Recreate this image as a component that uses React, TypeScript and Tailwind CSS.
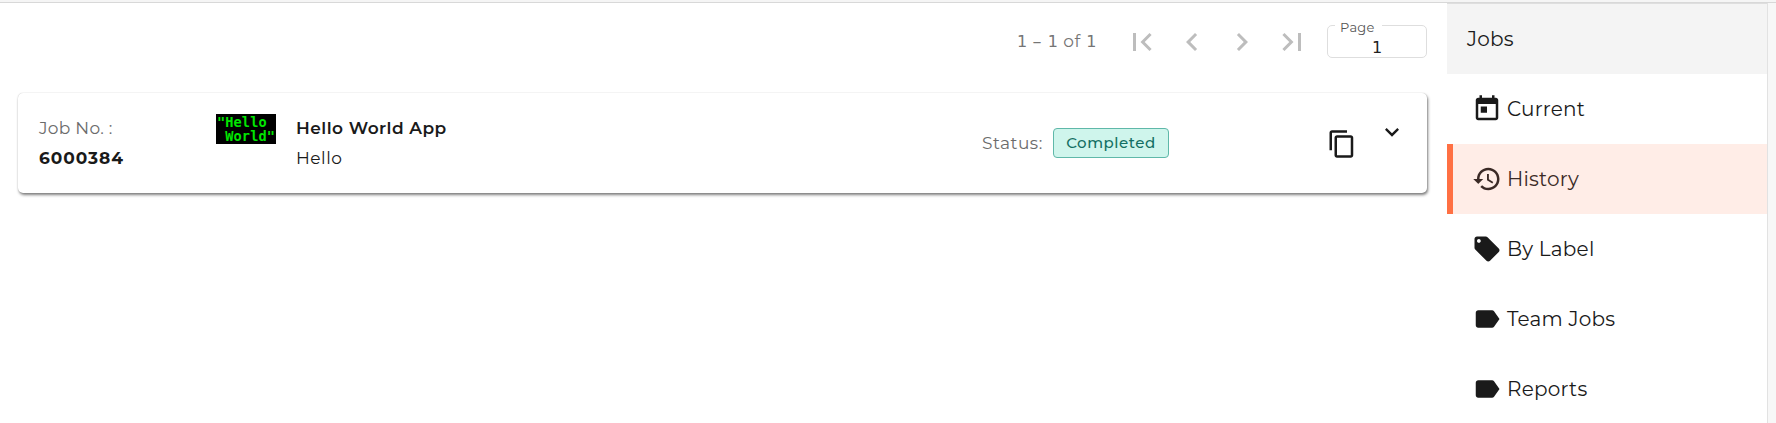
import React from "react";

type IconProps = { d: string; className?: string };

function Icon({ d, className = "" }: IconProps) {
  return (
    <svg viewBox="0 0 24 24" fill="currentColor" className={"block shrink-0 " + className} aria-hidden="true">
      <path d={d} />
    </svg>
  );
}

const icons = {
  first: "M18.41 16.59L13.82 12l4.59-4.59L17 6l-6 6 6 6zM6 6h2v12H6z",
  prev: "M15.41 7.41L14 6l-6 6 6 6 1.41-1.41L10.83 12z",
  next: "M10 6L8.59 7.41 13.17 12l-4.58 4.59L10 18l6-6z",
  last: "M5.59 7.41L10.18 12l-4.59 4.59L7 18l6-6-6-6zM16 6h2v12h-2z",
  more: "M16.59 8.59L12 13.17 7.41 8.59 6 10l6 6 6-6z",
  copy: "M16 1H4c-1.1 0-2 .9-2 2v14h2V3h12V1zm3 4H8c-1.1 0-2 .9-2 2v14c0 1.1.9 2 2 2h11c1.1 0 2-.9 2-2V7c0-1.1-.9-2-2-2zm0 16H8V7h11v14z",
  today: "M19 3h-1V1h-2v2H8V1H6v2H5c-1.11 0-1.99.9-1.99 2L3 19c0 1.1.89 2 2 2h14c1.1 0 2-.9 2-2V5c0-1.1-.9-2-2-2zm0 16H5V8h14v11zM7 10h5v5H7z",
  history: "M13 3c-4.97 0-9 4.03-9 9H1l3.89 3.89.07.14L9 12H6c0-3.87 3.13-7 7-7s7 3.13 7 7-3.13 7-7 7c-1.93 0-3.68-.79-4.94-2.06l-1.42 1.42C8.27 19.99 10.51 21 13 21c4.97 0 9-4.03 9-9s-4.03-9-9-9zm-1 5v5l4.28 2.54.72-1.21-3.5-2.08V8H12z",
  tag: "M21.41 11.58l-9-9C12.05 2.22 11.55 2 11 2H4c-1.1 0-2 .9-2 2v7c0 .55.22 1.05.59 1.42l9 9c.36.36.86.58 1.41.58s1.05-.22 1.41-.59l7-7c.37-.36.59-.86.59-1.41s-.23-1.06-.59-1.42zM5.5 7C4.67 7 4 6.33 4 5.5S4.67 4 5.5 4 7 4.67 7 5.5 6.33 7 5.5 7z",
  label: "M17.63 5.84C17.27 5.33 16.67 5 16 5L5 5.01C3.9 5.01 3 5.9 3 7v10c0 1.1.9 1.99 2 1.99L16 19c.67 0 1.27-.33 1.63-.84L22 12l-4.37-6.16z",
};

const menu = [
  { text: "Current", icon: icons.today },
  { text: "History", icon: icons.history, active: true },
  { text: "By Label", icon: icons.tag },
  { text: "Team Jobs", icon: icons.label },
  { text: "Reports", icon: icons.label },
];

function Paginator() {
  return (
    <div className="flex h-[77px] items-center justify-end pr-5 text-[#bdbdbd]">
      <span className="mr-[27px] w-[80px] whitespace-nowrap font-['DejaVu_Sans',sans-serif] text-[16px] tracking-[0.1px] text-[#757575]">
        1 <span className="inline-block w-[10px] text-[18px] leading-4">–</span> 1 <span className="font-[Montserrat,Inter,sans-serif] text-[17px] tracking-[0.8px]">of</span> 1
      </span>
      <button aria-label="First page" className="w-[50px]"><Icon d={icons.first} className="size-9" /></button>
      <button aria-label="Previous page" className="w-[50px]"><Icon d={icons.prev} className="size-9" /></button>
      <button aria-label="Next page" className="w-[50px]"><Icon d={icons.next} className="size-9" /></button>
      <button aria-label="Last page" className="w-[53px]"><Icon d={icons.last} className="size-9" /></button>
      <div className="relative mb-px h-[33px] w-[100px] rounded-[5px] border border-[#dedede]">
        <span className="absolute -top-[8px] left-[7px] w-[47px] bg-white pl-[5px] text-[13px] leading-[18px] tracking-[0.25px] text-[#555]">Page</span>
        <span className="block pt-[12px] text-center font-['DejaVu_Sans',sans-serif] text-[16px] leading-5 text-[#212121]">1</span>
      </div>
    </div>
  );
}

function JobCard() {
  return (
    <section className="ml-[18px] mt-[13px] flex h-[100px] w-[1409px] rounded-[5px] bg-white pl-[20px] text-[17px] leading-[30px] shadow-[0_0_1px_rgba(0,0,0,0.25),1px_2px_3px_rgba(0,0,0,0.5)]">
      <div className="w-[178px] pt-5">
        <p className="pl-px tracking-[0.3px] text-[#6b6b6b]">Job No. :</p>
        <p className="pl-px font-bold tracking-[0.95px]">6000384</p>
      </div>
      <div className="mt-[21px] h-[30px] w-[60px] whitespace-pre bg-black pl-[1px] pt-[2px] font-['DejaVu_Sans_Mono',monospace] text-[13.6px] font-bold leading-[13.5px] tracking-[0.1px] text-[#00e600]">
        {'"Hello\n World"'}
      </div>
      <div className="ml-5 w-[686px] pt-5">
        <p className="font-semibold tracking-[0.47px]">Hello World App</p>
        <p className="tracking-[0.5px]">Hello</p>
      </div>
      <div className="flex w-[345px] items-center">
        <span className="w-[71px] tracking-[0.5px] text-[#6b6b6b]">Status:</span>
        <span className="flex h-[30px] w-[116px] items-center justify-center rounded-[4px] border border-[#5fb8a9] bg-[#cff5ec] text-[15px] font-medium tracking-[0.55px] text-[#136f63]">Completed</span>
      </div>
      <button aria-label="Copy job" className="mt-[36px] self-start"><Icon d={icons.copy} className="size-[30px]" /></button>
      <button aria-label="Expand job" className="ml-[21px] mt-[25px] self-start"><Icon d={icons.more} className="size-7" /></button>
    </section>
  );
}

export default function App() {
  return (
    <div className="flex h-[423px] w-[1776px] flex-col overflow-hidden bg-white font-[Montserrat,Inter,sans-serif] text-[#1a1a1a]">
      <div className="h-[3px] shrink-0 border-b border-[#d8d8d8] bg-[#f5f5f5]" />
      <div className="flex min-h-0 flex-1">
        <main className="w-[1447px]">
          <Paginator />
          <JobCard />
        </main>
        <aside className="w-[320px] text-[20px] tracking-[0.22px]">
          <h2 className="flex h-[71px] items-center border-t border-[#dedede] bg-[#f4f4f4] pl-5">Jobs</h2>
          <nav>
            {menu.map((item) => (
              <a
                key={item.text}
                className={
                  "flex h-[70px] items-center border-l-[6px] pl-[19px] " +
                  (item.active ? "border-[#ff7043] bg-[#ffede7] text-[#3b2a26]" : "border-transparent")
                }
              >
                <Icon d={item.icon} className="size-[30px]" />
                <span className="ml-[5px]">{item.text}</span>
              </a>
            ))}
          </nav>
        </aside>
        <div className="w-[9px] border-l border-[#e2e2e2] bg-[#f7f7f7]" />
      </div>
    </div>
  );
}
